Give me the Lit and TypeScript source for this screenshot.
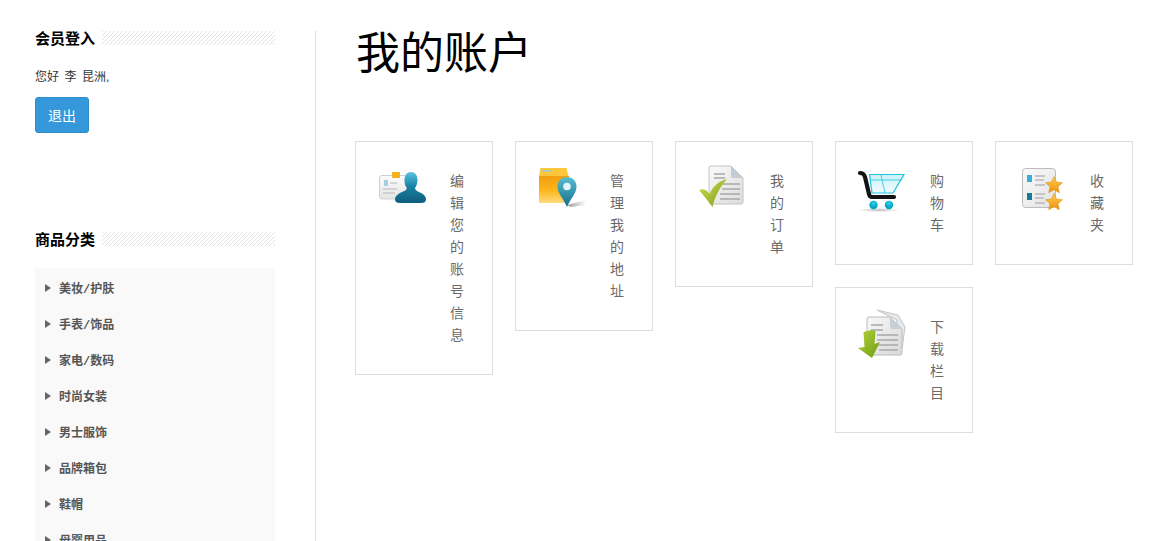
import { LitElement, html, css, svg } from "lit";
import { customElement } from "lit/decorators.js";

const icons = {
  user: svg`<defs>
    <linearGradient id="u1" x1="0" y1="0" x2="0" y2="1"><stop offset="0" stop-color="#5cc3e4"/><stop offset=".45" stop-color="#1a84a8"/><stop offset="1" stop-color="#0f5c7c"/></linearGradient>
    <linearGradient id="u2" x1="0" y1="0" x2="0" y2="1"><stop offset="0" stop-color="#fdfdfd"/><stop offset="1" stop-color="#e4e4e4"/></linearGradient></defs>
    <rect x=".5" y="10.5" width="27" height="23.5" rx="2.5" fill="url(#u2)" stroke="#cfcfcf"/>
    <rect x="13" y="7" width="8" height="6" fill="#f5b11e"/>
    <rect x="5" y="15" width="4" height="6" fill="#a6cede"/>
    <path d="M11 18h7M4 24h14M4 28h12" stroke="#b5b5b5" stroke-width="1"/>
    <path d="M32 7c4 0 6.500 3 6.500 8 0 4-1.500 6.500-2.500 8 0 2 2 3 5 4.500 3.500 1.500 6 3.500 6 7 0 2.500-2 3.500-5 3.500H21c-3 0-5-1-5-3.500 0-3.500 3-5.500 6-7 3-1.500 6-2.500 6-4.500-1.500-1.500-2.500-4-2.500-8 0-5 2.500-8 6.500-8z" fill="url(#u1)"/>`,
  addr: svg`<defs>
    <linearGradient id="a1" x1="0" y1="0" x2="0" y2="1"><stop offset="0" stop-color="#f09f0e"/><stop offset=".55" stop-color="#fdb71c"/><stop offset="1" stop-color="#ffdb7e"/></linearGradient>
    <linearGradient id="a2" x1="0" y1="0" x2="0" y2="1"><stop offset="0" stop-color="#5bbcd2"/><stop offset="1" stop-color="#11708c"/></linearGradient>
    <linearGradient id="a3" x1="0" y1="0" x2="1" y2="0"><stop offset="0" stop-color="#999"/><stop offset="1" stop-color="#fff"/></linearGradient></defs>
    <path d="M28 40 L47 35 V40 L32 42z" fill="url(#a3)"/>
    <path d="M1.500 3h26l2 8H0z" fill="#ffc63c"/>
    <rect x="3" y="5" width="9" height="1.500" fill="#8fd0d8"/>
    <rect x="0" y="11" width="30" height="27" fill="url(#a1)"/>
    <path d="M28 12c5.500 0 9.500 4 9.500 9.500 0 7-6 12-9.500 20.500-3.500-8.500-9.500-13.500-9.500-20.500C18.500 16 22.500 12 28 12z" fill="url(#a2)"/>
    <circle cx="28" cy="21.500" r="3.800" fill="#e4f5fa"/>`,
  order: svg`<defs>
    <linearGradient id="o1" x1="0" y1="0" x2="1" y2="1"><stop offset="0" stop-color="#fafafa"/><stop offset="1" stop-color="#dcdcdc"/></linearGradient>
    <linearGradient id="o2" x1="0" y1="0" x2="1" y2="1"><stop offset="0" stop-color="#d4dd52"/><stop offset="1" stop-color="#7d9c1c"/></linearGradient></defs>
    <path d="M12 1h20l12 12v24a2 2 0 0 1-2 2H12a2 2 0 0 1-2-2V3a2 2 0 0 1 2-2z" fill="url(#o1)" stroke="#c4c4c4"/>
    <path d="M32 1l12 12H34a2 2 0 0 1-2-2z" fill="#c2ccd4"/>
    <path d="M15 9h11M15 13h11M24 19h17M23 24h18M21 29h20M21 34h20" stroke="#a8a8a8" stroke-width="1.500"/>
    <path d="M0 25c4-2 8 0 10.500 4C14 21 20 16 28 14 21 22 16 31 13.500 42 10 37 5 31 0 25z" fill="url(#o2)"/>`,
  cart: svg`<defs>
    <linearGradient id="c1" x1="0" y1="0" x2="0" y2="1"><stop offset="0" stop-color="#cdf1f8"/><stop offset="1" stop-color="#f0fbfd"/></linearGradient>
    <radialGradient id="c2"><stop offset="0" stop-color="#bbb"/><stop offset="1" stop-color="#fff"/></radialGradient>
    <radialGradient id="c3" cx=".5" cy=".3"><stop offset="0" stop-color="#35cfe8"/><stop offset="1" stop-color="#00a5c6"/></radialGradient></defs>
    <ellipse cx="20" cy="45" rx="21" ry="2" fill="url(#c2)"/>
    <path d="M10.500 9.500H45L34 28H13z" fill="url(#c1)" stroke="#1cc5e2" stroke-width="1.200"/>
    <path d="M22 10l4 18M11 15h32" stroke="#1cc5e2" stroke-width=".8" fill="none"/>
    <path d="M1 8c3 0 4 1 5 4l4 17c.5 2 1 3 3 3h22" stroke="#141414" stroke-width="4.200" stroke-linecap="round" fill="none"/>
    <circle cx="14.500" cy="40" r="4.200" fill="url(#c3)"/><circle cx="30" cy="40" r="4.200" fill="url(#c3)"/>`,
  fav: svg`<defs>
    <linearGradient id="f1" x1="0" y1="0" x2="1" y2="1"><stop offset="0" stop-color="#fafafa"/><stop offset="1" stop-color="#e2e2e2"/></linearGradient>
    <linearGradient id="f2" x1="0" y1="0" x2="0" y2="1"><stop offset="0" stop-color="#fdd050"/><stop offset="1" stop-color="#ee8f0c"/></linearGradient></defs>
    <rect x="3.500" y="3.500" width="33" height="39" rx="3" fill="url(#f1)" stroke="#bcbcbc"/>
    <rect x="8" y="10" width="5" height="7" fill="#39aed6"/><rect x="8" y="28" width="5" height="7" fill="#157a99"/>
    <path d="M16 11h10M16 15h9M16 20h10M16 29h10M16 33h9M16 38h10" stroke="#b8b8b8" stroke-width="1.300"/>
    <path d="M35 11.500l2.500 5.500 6 .7-4.500 4 1.300 6-5.300-3-5.300 3 1.300-6-4.500-4 6-.7z" fill="url(#f2)" stroke="#d98a10" stroke-width=".5"/>
    <path d="M35 28.500l2.500 5.500 6 .7-4.500 4 1.300 6-5.300-3-5.300 3 1.300-6-4.500-4 6-.7z" fill="url(#f2)" stroke="#d98a10" stroke-width=".5"/>`,
  down: svg`<defs>
    <linearGradient id="d1" x1="0" y1="0" x2="1" y2="1"><stop offset="0" stop-color="#f8f8f8"/><stop offset="1" stop-color="#d8d8d8"/></linearGradient>
    <linearGradient id="d2" x1="0" y1="0" x2="1" y2="1"><stop offset="0" stop-color="#b5d23c"/><stop offset="1" stop-color="#6f9e14"/></linearGradient></defs>
    <path d="M18 -1l21 5 7 12-3 22-8-1 3-28z" fill="#e6e8ea" stroke="#c4c4c4"/>
    <path d="M10 6h21l12 12v24a2 2 0 0 1-2 2H10a2 2 0 0 1-2-2V8a2 2 0 0 1 2-2z" fill="url(#d1)" stroke="#bdbdbd"/>
    <path d="M31 6l12 12H33a2 2 0 0 1-2-2z" fill="#c6d0d8"/>
    <path d="M12 14h12M12 19h12M18 24h21M18 29h21M18 34h21M20 39h19" stroke="#a8a8a8" stroke-width="1.500"/>
    <path d="M4.500 21l8-2 4 1-1 13 5.500-2-8 16L-1 37l6.500-1z" fill="url(#d2)"/>`,
};

@customElement("app-root")
export class AppRoot extends LitElement {
  static styles = css`
    :host {
      display: flex;
      height: 541px;
      overflow: hidden;
      background: #fff;
      font-family: "Liberation Sans", "Noto Sans CJK SC", sans-serif;
      color: #333;
    }
    .side {
      box-sizing: border-box;
      width: 281px;
      margin: 31px 0 0 35px;
      padding-right: 40px;
      border-right: 1px solid #ddd;
      flex: none;
    }
    .head {
      display: flex;
      align-items: center;
      gap: 7px;
      height: 14px;
      font-size: 15px;
      font-weight: 700;
      color: #000;
      line-height: 16px;
      white-space: nowrap;
    }
    .headtext {
      padding-top: 2px;
    }
    .hatch {
      flex: 1;
      height: 14px;
      background: repeating-linear-gradient(135deg, #e2e2e2 0 1px, #fff 1px 2.83px);
    }
    .hello {
      margin-top: 24px;
      font-size: 12px;
      line-height: 17px;
      color: #333;
      word-spacing: -0.6px;
    }
    .out {
      display: block;
      box-sizing: border-box;
      margin-top: 11px;
      width: 54px;
      height: 36px;
      border: 1px solid #2d8dcd;
      border-radius: 3px;
      padding: 0;
      background: #3498db;
      color: #fff;
      font: inherit;
      font-size: 14px;
    }
    .login { height: 201px; }
    .panel {
      margin: 22px 0 0;
      padding: 2px 0 0;
      background: #f9f9f9;
      list-style: none;
    }
    .panel li {
      display: flex;
      align-items: center;
      height: 36px;
      padding-left: 10px;
      font-family: "Liberation Mono", "Noto Sans CJK SC", monospace;
      font-size: 12px;
      line-height: 34px;
      font-weight: 700;
      color: #555;
    }
    .cat { padding-top: 4px; }
    .tri {
      width: 0;
      height: 0;
      border-left: 6px solid #666;
      border-top: 4px solid transparent;
      border-bottom: 4px solid transparent;
      margin: -1px 8px 0 0;
    }
    .main {
      flex: 1;
      padding: 0 0 0 39px;
    }
    h1 {
      box-sizing: border-box;
      margin: 0 0 0 1px;
      padding-top: 32px;
      height: 141px;
      font-family: "Liberation Serif", "Noto Sans CJK SC", serif;
      font-weight: 400;
      font-size: 44px;
      line-height: 46px;
      color: #000;
    }
    .cards { width: 800px; }
    .card {
      float: left;
      box-sizing: border-box;
      display: flex;
      width: 138px;
      margin: 0 22px 22px 0;
      padding: 28px 0 28px 23px;
      border: 1px solid #ddd;
    }
    .card svg {
      display: block;
      flex: none;
      width: 50px;
      height: 50px;
      margin-top: -5px;
      overflow: visible;
    }
    .label {
      width: 14px;
      margin-left: 21px;
      font-size: 14px;
      line-height: 22px;
      color: #6a6a6a;
    }
  `;

  render() {
    const cards: [keyof typeof icons, string][] = [
      ["user", "编辑您的账号信息"],
      ["addr", "管理我的地址"],
      ["order", "我的订单"],
      ["cart", "购物车"],
      ["fav", "收藏夹"],
      ["down", "下载栏目"],
    ];
    const cats = ["美妆/护肤", "手表/饰品", "家电/数码", "时尚女装", "男士服饰", "品牌箱包", "鞋帽", "母婴用品"];
    return html`
      <aside class="side">
        <section class="login">
          <div class="head"><span class="headtext">会员登入</span><span class="hatch"></span></div>
          <div class="hello">您好&nbsp; 李&nbsp; 昆洲,</div>
          <button class="out">退出</button>
        </section>
        <section>
          <div class="head"><span class="headtext">商品分类</span><span class="hatch"></span></div>
          <ul class="panel">
            ${cats.map((c) => html`<li><span class="tri"></span><span class="cat">${c}</span></li>`)}
          </ul>
        </section>
      </aside>
      <main class="main">
        <h1>我的账户</h1>
        <div class="cards">
          ${cards.map(
            ([i, t]) => html`<div class="card">
              <svg viewBox="0 0 50 50">${icons[i]}</svg>
              <div class="label">${t}</div>
            </div>`
          )}
        </div>
      </main>
    `;
  }
}
